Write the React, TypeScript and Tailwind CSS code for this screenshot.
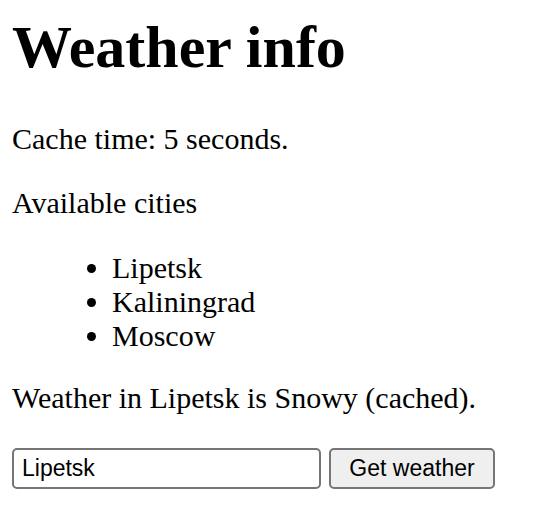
import React, { useState } from "react";

const CITIES = ["Lipetsk", "Kaliningrad", "Moscow"];

export default function App() {
  const [city, setCity] = useState("Lipetsk");

  return (
    <div className="min-h-screen bg-white pl-[12px] pt-[13px] text-black font-['Liberation_Serif',serif]">
      <h1 className="text-[60px] font-bold leading-[69px] mb-[40px]">Weather info</h1>

      <p className="text-[30px] leading-[34px] mb-[30px]">Cache time: 5 seconds.</p>

      <p className="text-[30px] leading-[34px] mb-[31px]">Available cities</p>

      <ul className="list-disc pl-[100px] text-[30px] leading-[34px] mb-[28px]">
        {CITIES.map((c) => (
          <li key={c}>{c}</li>
        ))}
      </ul>

      <p className="text-[30px] leading-[34px] mb-[33px]">
        Weather in Lipetsk is Snowy (cached).
      </p>

      {/* City form */}
      <div className="flex items-center gap-[8px] font-['Liberation_Sans',Arial,sans-serif]">
        <input
          type="text"
          value={city}
          onChange={(e) => setCity(e.target.value)}
          className="w-[309px] h-[41px] px-[8px] text-[23px] text-black bg-white border-2 border-[#767676] rounded-[5px] outline-none"
        />
        <button
          type="button"
          className="w-[166px] h-[41px] text-[23px] text-black bg-[#efefef] border-2 border-[#767676] rounded-[5px]"
        >
          Get weather
        </button>
      </div>
    </div>
  );
}
